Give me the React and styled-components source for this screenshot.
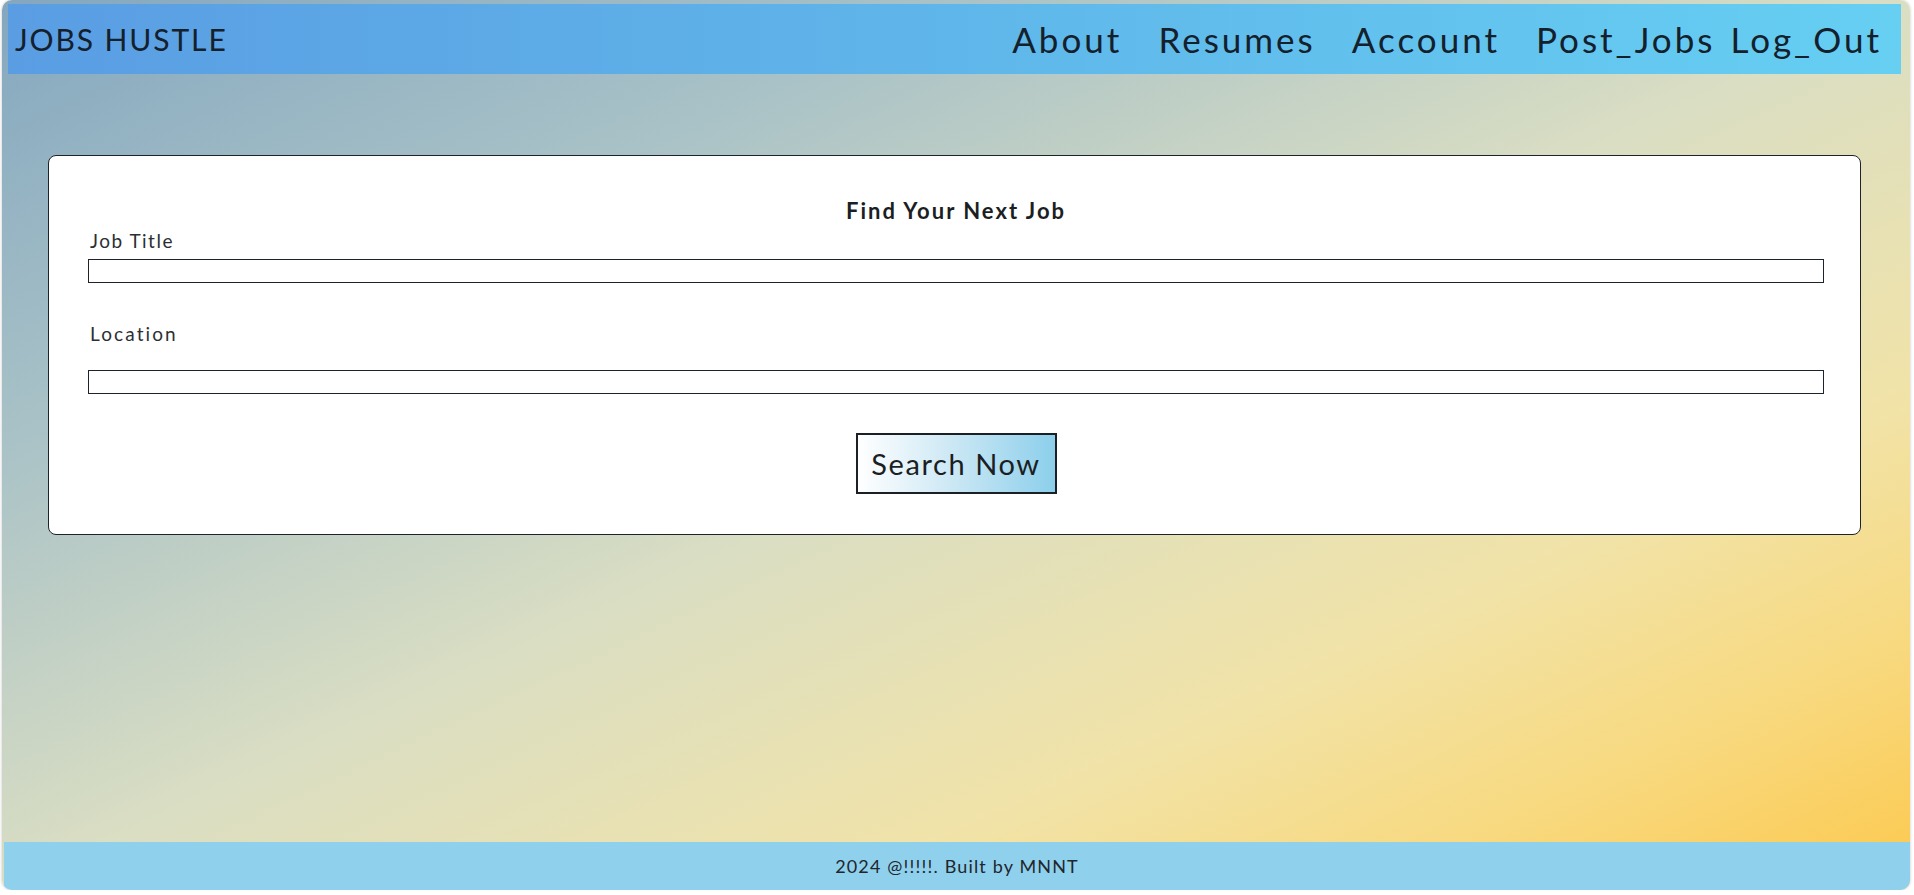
import React from 'react';
import styled, { createGlobalStyle } from 'styled-components';

// Global -->

const GlobalStyle = createGlobalStyle`
  html, body {
    margin: 0;
    padding: 0;
    background: #ffffff;
  }
  * {
    box-sizing: border-box;
  }
  body {
    font-family: Lato, "Open Sans", sans-serif;
    color: #1b1f24;
  }
`;

// Styled Components -->

const Page = styled.div`
  display: flex;
  flex-direction: column;
  width: 1908px;
  height: 890px;
  margin-left: 2px;
  border-radius: 10px;
  overflow: hidden;
  box-shadow: 0 0 3px rgba(0, 0, 0, 0.25);
  background: linear-gradient(
    to bottom right,
    #84a7bf 0%,
    #a9c2c7 25%,
    #dadec3 50%,
    #f1e3a8 72%,
    #f8d97f 86%,
    #fcc84c 100%
  );
`;

const Header = styled.header`
  display: flex;
  align-items: center;
  height: 70px;
  margin: 4px 9px 0 6px;
  padding: 0 19px 0 7px;
  background: linear-gradient(90deg, #5a9de3 0%, #5fb6ea 50%, #66cff2 100%);
`;

const Brand = styled.div`
  flex: 1;
  font-size: 30px;
  letter-spacing: 1.9px;
  color: #14202c;
`;

const NavLink = styled.a`
  margin-left: ${props => props.gap || 36}px;
  font-size: 35px;
  letter-spacing: 3px;
  color: #14202c;
  text-decoration: none;
  cursor: pointer;
`;

const Main = styled.main`
  flex: 1;
  padding: 81px 49px 0 46px;
`;

const Card = styled.section`
  display: flex;
  flex-direction: column;
  padding: 41px 36px 40px 39px;
  border: 1px solid #1d232a;
  border-radius: 8px;
  background: #ffffff;
`;

const Heading = styled.h2`
  margin: 0;
  text-align: center;
  font-size: 22px;
  line-height: 28px;
  font-weight: 700;
  letter-spacing: 2px;
  color: #1b1f24;
`;

const Label = styled.label`
  margin-top: ${props => props.top}px;
  padding-left: 2px;
  font-size: 19px;
  line-height: 22px;
  letter-spacing: ${props => props.spacing || 1.5}px;
  color: #2b2f33;
`;

const Input = styled.input`
  display: block;
  width: 100%;
  height: 24px;
  margin-top: ${props => props.top}px;
  border: 1px solid #1d232a;
  border-radius: 0;
  background: #ffffff;
  outline: none;
`;

const Button = styled.button`
  align-self: center;
  width: 201px;
  height: 61px;
  margin-top: 39px;
  border: 2px solid #1a2026;
  background: linear-gradient(90deg, #ffffff 0%, #cfe9f5 45%, #8ccfeb 100%);
  font-family: Lato, "Open Sans", sans-serif;
  font-size: 29px;
  letter-spacing: 1.6px;
  color: #1b1f24;
  cursor: pointer;
`;

const Footer = styled.footer`
  display: flex;
  align-items: center;
  justify-content: center;
  height: 48px;
  margin-left: 2px;
  background: #8fd0ec;
  font-size: 18px;
  letter-spacing: 1.15px;
  color: #1f262c;
`;

// App Component -->

const links = ['About', 'Resumes', 'Account', 'Post_Jobs'];

const App = () => {
  return (
    <React.Fragment>
      <GlobalStyle />
      <Page>
        <Header>
          <Brand>JOBS HUSTLE</Brand>
          {links.map(link => (
            <NavLink key={link}>{link}</NavLink>
          ))}
          <NavLink gap={15}>Log_Out</NavLink>
        </Header>
        <Main>
          <Card>
            <Heading>Find Your Next Job</Heading>
            <Label top={5}>Job Title</Label>
            <Input type="text" top={7} />
            <Label top={40} spacing={2.1}>Location</Label>
            <Input type="text" top={25} />
            <Button type="button">Search Now</Button>
          </Card>
        </Main>
        <Footer>2024 @!!!!!. Built by MNNT</Footer>
      </Page>
    </React.Fragment>
  );
};

export default App;
